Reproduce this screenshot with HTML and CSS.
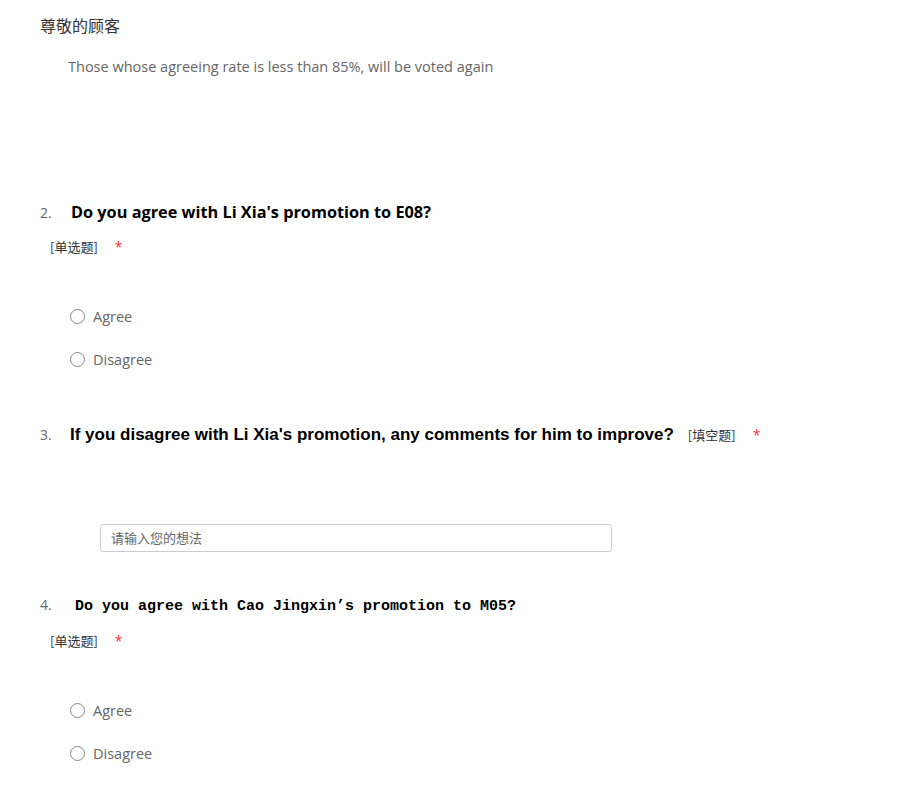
FILE: index.html
```html
<!DOCTYPE html>
<html>
<head>
<meta charset="utf-8">
<link rel="stylesheet" href="styles.css">
</head>
<body>
<div class="page">
  <div class="greeting">尊敬的顾客</div>
  <div class="intro">Those whose agreeing rate is less than 85%, will be voted again</div>

  <div class="question q2">
    <div class="qhead">
      <span class="num">2.</span>
      <span class="title t-bold">Do you agree with Li Xia's promotion to E08?</span>
    </div>
    <div class="qtype"><span class="tag">[单选题]</span><span class="req">*</span></div>
    <div class="options">
      <label class="opt"><span class="radio"></span><span class="otext">Agree</span></label>
      <label class="opt"><span class="radio"></span><span class="otext">Disagree</span></label>
    </div>
  </div>

  <div class="question q3">
    <div class="qhead">
      <span class="num">3.</span>
      <span class="title t-narrow">If you disagree with Li Xia's promotion, any comments for him to improve?</span>
      <span class="tag inline">[填空题]</span><span class="req">*</span>
    </div>
    <div class="inputwrap"><div class="textbox">请输入您的想法</div></div>
  </div>

  <div class="question q4">
    <div class="qhead">
      <span class="num">4.</span>
      <span class="title t-mono">Do you agree with Cao Jingxin’s promotion to M05?</span>
    </div>
    <div class="qtype"><span class="tag">[单选题]</span><span class="req">*</span></div>
    <div class="options">
      <label class="opt"><span class="radio"></span><span class="otext">Agree</span></label>
      <label class="opt"><span class="radio"></span><span class="otext">Disagree</span></label>
    </div>
  </div>
</div>
</body>
</html>
```

FILE: styles.css
```css
html, body {
  margin: 0;
  padding: 0;
  background: #fff;
}
body {
  font-family: "Open Sans", "Noto Sans", "Noto Sans CJK SC", sans-serif;
  color: #333;
}
.page {
  padding: 13px 0 0 40px;
}
.greeting {
  font-family: "Noto Sans CJK SC", sans-serif;
  font-size: 16px;
  line-height: 24px;
  color: #333;
}
.intro {
  margin-top: 20px;
  padding-left: 28px;
  font-size: 14.5px;
  line-height: 20px;
  color: #666;
}
.question {
  display: flex;
  flex-direction: column;
}
.q2 { margin-top: 123px; }
.q3 { margin-top: 53px; }
.q4 { margin-top: 41px; }
.qhead {
  display: flex;
  align-items: baseline;
  line-height: 24px;
}
.num {
  font-size: 14px;
  color: #666;
  width: 30px;
}
.title {
  color: #000;
  font-weight: bold;
}
.t-bold {
  font-family: "Open Sans", "Noto Sans", sans-serif;
  font-size: 16.3px;
  margin-left: 1px;
}
.t-narrow {
  font-family: "Liberation Sans Narrow", "Arial Narrow", "Liberation Sans", sans-serif;
  font-size: 17px;
  letter-spacing: 0;
}
.t-mono {
  font-family: "Liberation Mono", monospace;
  font-size: 15px;
  margin-left: 5px;
}
.qtype {
  display: flex;
  align-items: baseline;
  margin-top: 12px;
  padding-left: 10px;
  line-height: 20px;
}
.tag {
  font-family: "Noto Sans CJK SC", sans-serif;
  font-size: 13px;
  color: #333;
}
.tag.inline {
  margin-left: 14px;
}
.req {
  color: #f33;
  font-size: 14px;
  margin-left: 17px;
}
.options {
  display: flex;
  flex-direction: column;
  gap: 21px;
  margin-top: 48px;
  padding-left: 30px;
}
.opt {
  display: flex;
  align-items: center;
  gap: 8px;
  height: 22px;
}
.radio {
  width: 13px;
  height: 13px;
  border: 1px solid #888;
  border-radius: 50%;
  box-sizing: content-box;
}
.otext {
  font-size: 14.5px;
  color: #666;
}
.inputwrap {
  margin-top: 77px;
  padding-left: 60px;
}
.textbox {
  width: 500px;
  height: 26px;
  border: 1px solid #ccc;
  border-radius: 3px;
  padding-left: 10px;
  font-family: "Noto Sans CJK SC", sans-serif;
  font-size: 13px;
  line-height: 26px;
  color: #666;
}
```
